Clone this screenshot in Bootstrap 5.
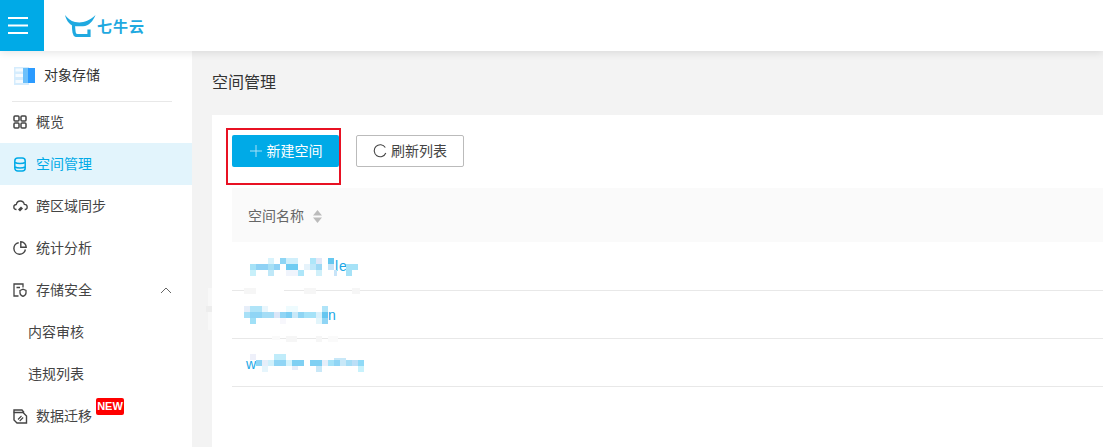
<!DOCTYPE html>
<html lang="zh">
<head>
<meta charset="utf-8">
<title>空间管理</title>
<link rel="stylesheet" href="https://cdn.jsdelivr.net/npm/bootstrap@5.3.0/dist/css/bootstrap.min.css">
<style>
html,body{height:100%;}
body{font-family:"Liberation Sans","Noto Sans CJK SC",sans-serif;font-size:14px;background:#f3f3f3;color:#333;overflow:hidden;}
.topbar{height:51px;background:#fff;box-shadow:0 2px 8px rgba(0,0,0,.1);position:relative;z-index:2;}
.burger{width:44px;height:51px;background:#00aae7;border:0;padding:0 8px 0 0;border-radius:0;}
.logo-wrap{margin-left:21px;gap:1px;}
.logo-word{color:#1fa9e0;font-size:15px;font-weight:700;letter-spacing:1px;line-height:1;margin-top:2px;}
.sidebar{width:192px;background:#fff;flex:none;height:396px;}
.prod{height:49px;padding-left:14px;gap:9px;color:#333;}
.sep{height:1px;background:#e8e8e8;margin:1px 20px -1px 12px;}
.menu-row{height:42px;padding-left:13px;gap:8px;color:#444;}
.menu-row svg{flex:none;}
.menu-row.on{background:#e2f4fc;color:#00aae7;}
.menu-row.sub{padding-left:28px;}
.chev{margin-left:auto;margin-right:20px;}
.new-tag{background:#f00;color:#fff;font-size:11px;font-weight:700;line-height:17px;height:17px;width:28px;text-align:center;border-radius:2px;position:absolute;left:96px;top:3px;}
.page-title{height:64px;padding-left:20px;font-size:16px;color:#333;}
.panel{background:#fff;margin-left:20px;padding:20px;height:332px;width:911px;position:relative;}
.act-btn{height:32px;border-radius:2px;font-size:14px;padding:0;}
.act-new{width:107px;background:#00aae7;color:#fff;border:0;gap:5px;padding-left:1px;}
.act-new:hover{background:#00aae7;color:#fff;}
.act-ref{width:108px;background:#fff;color:#444;border:1px solid #bbb;margin-left:17px;gap:4px;}
.annot{position:absolute;left:14px;top:13px;width:115px;height:57px;border:2px solid #e81123;pointer-events:none;}
.thead-row{background:#fafafa;height:54px;margin-top:21px;padding:2px 0 0 16px;color:#666;gap:9px;}
.tbody-row{height:48px;border-bottom:1px solid #e8e8e8;}
.tbody-row.first{height:49px;}
.mosaic{position:absolute;left:0;top:0;overflow:visible;pointer-events:none;}
.leak{font-family:"Liberation Sans",sans-serif;font-size:14px;fill:#1aa7e6;}
</style>
</head>
<body>
<header class="topbar d-flex align-items-center">
  <button class="burger d-flex align-items-center justify-content-center" aria-label="菜单">
    <svg width="20" height="17" viewBox="0 0 20 17"><path d="M0 1h20M0 8.500h20M0 16h20" stroke="#fff" stroke-width="2"/></svg>
  </button>
  <div class="logo-wrap d-flex align-items-center">
    <svg width="31" height="22" viewBox="0 0 31 22"><path d="M0 0C2.500 3 5.500 6 10 7c6 1 13 .5 20.500-7C28 6 24 11 18 11.300H11C5 11 1.500 6 0 0z" fill="#1fa9e0"/><path d="M8.500 9.500c0 3 .2 5.500.6 8 .4 2.200 1.600 3.200 3.600 3.200H24V14.500" fill="none" stroke="#1fa9e0" stroke-width="3.200"/></svg>
    <span class="logo-word">七牛云</span>
  </div>
</header>
<div class="d-flex">
  <nav class="sidebar">
    <div class="prod d-flex align-items-center">
      <svg width="21" height="20" viewBox="0 0 21 20"><rect x="0" y="1" width="15" height="18" fill="#d5ecfd"/><rect x="1.500" y="2.500" width="11" height="3" fill="#f6fbff"/><rect x="1.500" y="8" width="11" height="3" fill="#f6fbff"/><rect x="1.500" y="14" width="11" height="3" fill="#f6fbff"/><rect x="9" y="2" width="12" height="15" fill="#2b9bff"/><rect x="9" y="2" width="5" height="15" fill="#6cc0fb"/></svg>
      <span>对象存储</span>
    </div>
    <div class="sep"></div>
    <div class="menu-row d-flex align-items-center">
      <svg width="15" height="14" viewBox="0 0 15 14" fill="none" stroke="#444" stroke-width="1.500"><rect x="1" y="1" width="5" height="5" rx="1"/><rect x="8" y="1" width="5" height="5" rx="1"/><rect x="1" y="8" width="5" height="5" rx="1"/><rect x="8" y="8" width="5" height="5" rx="1"/></svg>
      <span>概览</span>
    </div>
    <div class="menu-row on d-flex align-items-center">
      <svg width="15" height="15" viewBox="0 0 15 15" fill="none" stroke="#00aae7" stroke-width="1.500"><rect x="1.800" y="1" width="10.400" height="13" rx="3"/><path d="M2 5.500c2 1.300 8 1.300 10 0M2 10c2 1.300 8 1.300 10 0"/></svg>
      <span>空间管理</span>
    </div>
    <div class="menu-row d-flex align-items-center">
      <svg width="15" height="14" viewBox="0 0 15 14" fill="none" stroke="#444" stroke-width="1.300"><path d="M3.500 10.500C1.800 10.500 .8 9.300 .8 8c0-1.300 1-2.400 2.500-2.500C3.700 3.400 5.300 2 7.300 2c2 0 3.600 1.300 4 3.300 1.500 0 2.900 1.200 2.900 2.700 0 1.400-1 2.500-2.500 2.500"/><path d="M5 10.500L8 7.500l2 2-3 3z" fill="#444" stroke="none"/></svg>
      <span>跨区域同步</span>
    </div>
    <div class="menu-row d-flex align-items-center">
      <svg width="15" height="14" viewBox="0 0 15 14" fill="none" stroke="#444" stroke-width="1.400"><path d="M5.700 1.700a5.800 5.800 0 1 0 6.700 6.800"/><path d="M7.800 .8a5.400 5.400 0 0 1 5.400 5.400H7.800z"/></svg>
      <span>统计分析</span>
    </div>
    <div class="menu-row d-flex align-items-center">
      <svg width="15" height="14" viewBox="0 0 15 14" fill="none" stroke="#444" stroke-width="1.300"><path d="M5.500 13H1V1h9v3.500M3.500 4.500h3.500"/><path d="M7 7.500l3-1.300 3 1.300v2.500c0 1.500-1.500 2.800-3 3.400-1.500-.6-3-1.900-3-3.400z"/></svg>
      <span>存储安全</span>
      <svg class="chev" width="12" height="7" viewBox="0 0 12 7" fill="none" stroke="#666" stroke-width="1"><path d="M1 6l5-5 5 5"/></svg>
    </div>
    <div class="menu-row sub d-flex align-items-center"><span>内容审核</span></div>
    <div class="menu-row sub d-flex align-items-center"><span>违规列表</span></div>
    <div class="menu-row d-flex align-items-center position-relative">
      <svg width="15" height="15" viewBox="0 0 15 15" fill="none" stroke="#444" stroke-width="1.400"><path d="M1 3.500V1h8l2 2.500"/><path d="M1 3.500h9l3.500 3.500v7H4l-3-3z"/><path d="M5 10.500l3.500-3.500M6.700 12l3.500-3.500" stroke-width="1.100"/></svg>
      <span>数据迁移</span>
      <span class="new-tag">NEW</span>
    </div>
  </nav>
  <main class="flex-grow-1">
    <div class="page-title d-flex align-items-center">空间管理</div>
    <section class="panel">
      <div class="d-flex">
        <button class="btn act-btn act-new d-flex align-items-center justify-content-center">
          <svg width="12" height="12" viewBox="0 0 12 12"><path d="M6 0v12M0 6h12" stroke="#a8e0f7" stroke-width="1"/></svg>
          <span>新建空间</span>
        </button>
        <button class="btn act-btn act-ref d-flex align-items-center justify-content-center">
          <svg width="14" height="14" viewBox="0 0 14 14" fill="none" stroke="#444" stroke-width="1.100"><path d="M12.300 3.500A6 6 0 1 0 12.800 9"/></svg>
          <span>刷新列表</span>
        </button>
      </div>
      <div class="annot"></div>
      <div class="thead-row d-flex align-items-center">
        <span>空间名称</span>
        <svg width="9" height="13" viewBox="0 0 9 13"><path d="M4.500 0l4.500 5.500H0z" fill="#bbb"/><path d="M4.500 13L9 7.500H0z" fill="#bbb"/></svg>
      </div>
      <div class="tbody-row first"></div>
      <div class="tbody-row"></div>
      <div class="tbody-row"></div>
      <svg class="mosaic" width="160" height="272" viewBox="0 0 160 272">
        <g transform="translate(-212,-115)">
          <text class="leak" x="335" y="271">l</text><text class="leak" x="339" y="271">e</text>
          <text class="leak" x="328" y="320">n</text>
          <text class="leak" x="246" y="369">w</text>
          <g shape-rendering="crispEdges">
            <rect x="268" y="258" width="6" height="6" fill="#d8f3fc"/><rect x="280" y="258" width="6" height="6" fill="#8fd6f5"/><rect x="286" y="258" width="12" height="6" fill="#d0effb"/><rect x="310" y="258" width="6" height="6" fill="#aee6f9"/><rect x="316" y="258" width="6" height="6" fill="#e2e8f8"/><rect x="328" y="258" width="6" height="6" fill="#66c8f0"/>
            <rect x="250" y="264" width="6" height="6" fill="#a6e2f7"/><rect x="256" y="264" width="12" height="6" fill="#8fd2f5"/><rect x="268" y="264" width="6" height="6" fill="#a6dff5"/><rect x="274" y="264" width="6" height="6" fill="#8fd2f5"/><rect x="286" y="264" width="12" height="6" fill="#70ccf2"/><rect x="304" y="264" width="6" height="6" fill="#e6f3fb"/><rect x="310" y="264" width="6" height="6" fill="#bfe8fa"/><rect x="316" y="264" width="6" height="6" fill="#9fd9f5"/><rect x="328" y="264" width="6" height="6" fill="#c8e4f8"/><rect x="346" y="264" width="12" height="6" fill="#a6e2f7"/>
            <rect x="250" y="270" width="6" height="6" fill="#c8f0fa"/><rect x="268" y="270" width="6" height="6" fill="#bfe8f8"/><rect x="286" y="270" width="12" height="6" fill="#f0f4fc"/><rect x="298" y="270" width="6" height="6" fill="#aee6f9"/><rect x="316" y="270" width="6" height="6" fill="#d0f0fa"/><rect x="334" y="270" width="3" height="6" fill="#c8e4f8"/><rect x="346" y="270" width="6" height="6" fill="#a6e2f7"/>
            <rect x="244" y="306" width="6" height="6" fill="#e6eef9"/><rect x="250" y="306" width="12" height="6" fill="#b0e4f8"/><rect x="262" y="306" width="6" height="6" fill="#eaf6fc"/><rect x="286" y="306" width="12" height="6" fill="#eefbfe"/><rect x="322" y="306" width="6" height="6" fill="#b0e4f8"/>
            <rect x="244" y="312" width="6" height="6" fill="#a8e0f7"/><rect x="250" y="312" width="12" height="6" fill="#90d5f5"/><rect x="262" y="312" width="12" height="6" fill="#a5ddf6"/><rect x="274" y="312" width="6" height="6" fill="#dbe6f8"/><rect x="280" y="312" width="6" height="6" fill="#90d5f5"/><rect x="286" y="312" width="6" height="6" fill="#7ccef3"/><rect x="292" y="312" width="6" height="6" fill="#c8e8f8"/><rect x="298" y="312" width="6" height="6" fill="#8fd5f4"/><rect x="304" y="312" width="12" height="6" fill="#a5e2f8"/><rect x="316" y="312" width="6" height="6" fill="#d8f0fb"/><rect x="322" y="312" width="6" height="6" fill="#66c6f0"/>
            <rect x="250" y="318" width="6" height="6" fill="#a0e0f7"/><rect x="280" y="318" width="6" height="6" fill="#f7f7fc"/><rect x="316" y="318" width="6" height="6" fill="#e2f5fb"/><rect x="322" y="318" width="6" height="6" fill="#90d5f5"/>
            <rect x="250" y="354" width="6" height="6" fill="#eef0fa"/><rect x="274" y="354" width="12" height="6" fill="#c0ecfa"/><rect x="334" y="358" width="12" height="2" fill="#c8e8f8"/>
            <rect x="256" y="360" width="6" height="6" fill="#8fd5f5"/><rect x="262" y="360" width="6" height="6" fill="#e6eef9"/><rect x="268" y="360" width="6" height="6" fill="#d0f0fb"/><rect x="274" y="360" width="12" height="6" fill="#90d5f5"/><rect x="286" y="360" width="6" height="6" fill="#d5f3fc"/><rect x="292" y="360" width="12" height="6" fill="#7fd0f3"/><rect x="310" y="360" width="12" height="6" fill="#7fd0f3"/><rect x="322" y="360" width="6" height="6" fill="#e6eef9"/><rect x="328" y="360" width="6" height="6" fill="#a5e2f8"/><rect x="334" y="360" width="6" height="6" fill="#90d5f5"/><rect x="340" y="360" width="6" height="6" fill="#c8e8f8"/><rect x="346" y="360" width="6" height="6" fill="#a5ddf6"/><rect x="352" y="360" width="6" height="6" fill="#bcdff7"/><rect x="358" y="360" width="6" height="6" fill="#90daf7"/>
            <rect x="262" y="366" width="6" height="6" fill="#e6f5fc"/><rect x="292" y="366" width="6" height="4" fill="#e6eefa"/><rect x="316" y="366" width="6" height="6" fill="#c8e8f8"/><rect x="358" y="366" width="6" height="6" fill="#c8f2fc"/>
            <rect x="244" y="288" width="12" height="6" fill="#f6f6f6"/><rect x="304" y="288" width="12" height="6" fill="#f6f6f6"/><rect x="352" y="288" width="8" height="6" fill="#f6f6f6"/><rect x="256" y="290" width="28" height="1" fill="#fff"/>
            <rect x="286" y="336" width="11" height="6" fill="#f6f6f6"/><rect x="316" y="336" width="6" height="6" fill="#f6f6f6"/><rect x="328" y="336" width="10" height="6" fill="#fafafa"/><rect x="272" y="336" width="8" height="4" fill="#fafafa"/>
            <rect x="208" y="288" width="4" height="42" fill="#f8f8f8"/><rect x="206" y="306" width="6" height="6" fill="#ededed"/>
          </g>
        </g>
      </svg>
    </section>
  </main>
</div>
<script src="https://cdn.jsdelivr.net/npm/bootstrap@5.3.0/dist/js/bootstrap.bundle.min.js"></script>
</body>
</html>
